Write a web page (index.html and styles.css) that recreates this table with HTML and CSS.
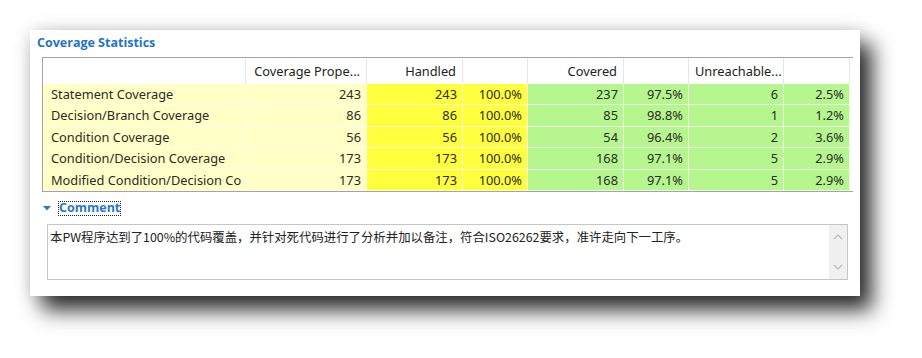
FILE: index.html
```html
<!DOCTYPE html>
<html>
<head>
<meta charset="utf-8">
<link rel="stylesheet" href="styles.css">
</head>
<body>
<div class="page">
<div class="panel">
  <div class="title">Coverage Statistics</div>
  <div class="grid">
    <div class="h"></div>
    <div class="h">Coverage Prope...</div>
    <div class="h">Handled</div>
    <div class="h"></div>
    <div class="h">Covered</div>
    <div class="h"></div>
    <div class="h hl">Unreachable...</div>
    <div class="h"></div>
    <div class="h end"></div>

    <div class="c ly l">Statement Coverage</div><div class="c ly">243</div><div class="c y">243</div><div class="c y">100.0%</div><div class="c g">237</div><div class="c g">97.5%</div><div class="c g">6</div><div class="c g">2.5%</div><div class="c end"></div>
    <div class="c ly l">Decision/Branch Coverage</div><div class="c ly">86</div><div class="c y">86</div><div class="c y">100.0%</div><div class="c g">85</div><div class="c g">98.8%</div><div class="c g">1</div><div class="c g">1.2%</div><div class="c end"></div>
    <div class="c ly l">Condition Coverage</div><div class="c ly">56</div><div class="c y">56</div><div class="c y">100.0%</div><div class="c g">54</div><div class="c g">96.4%</div><div class="c g">2</div><div class="c g">3.6%</div><div class="c end"></div>
    <div class="c ly l">Condition/Decision Coverage</div><div class="c ly">173</div><div class="c y">173</div><div class="c y">100.0%</div><div class="c g">168</div><div class="c g">97.1%</div><div class="c g">5</div><div class="c g">2.9%</div><div class="c end"></div>
    <div class="c ly l">Modified Condition/Decision Co</div><div class="c ly">173</div><div class="c y">173</div><div class="c y">100.0%</div><div class="c g">168</div><div class="c g">97.1%</div><div class="c g">5</div><div class="c g">2.9%</div><div class="c end"></div>
  </div>
  <div class="comment-head">
    <svg class="tri" width="8" height="5" viewBox="0 0 8 5"><path d="M0 0 L8 0 L4 4.5 Z" fill="#2a78cc"/></svg>
    <span class="comment-label">Comment</span>
  </div>
  <div class="textbox">
    <div class="text">本PW程序达到了100%的代码覆盖，并针对死代码进行了分析并加以备注，符合ISO26262要求，准许走向下一工序。</div>
    <div class="scroll">
      <svg width="10" height="6" viewBox="0 0 10 6"><path d="M1 5 L5 1 L9 5" fill="none" stroke="#b8b8b8" stroke-width="1.2"/></svg>
      <svg width="10" height="6" viewBox="0 0 10 6"><path d="M1 1 L5 5 L9 1" fill="none" stroke="#b8b8b8" stroke-width="1.2"/></svg>
    </div>
  </div>
</div>
</div>
</body>
</html>
```
FILE: styles.css
```css
html, body { margin: 0; padding: 0; background: #fff; }
body { font-family: "Noto Sans", "Noto Sans CJK SC", sans-serif; color: #222; }
.page {
  width: 922px;
  height: 358px;
  padding: 30px 0 0 30px;
  box-sizing: border-box;
  overflow: hidden;
}
.panel {
  width: 830px;
  height: 266px;
  background: #fff;
  box-sizing: border-box;
  padding: 3px 0 0 12px;
  box-shadow: 12px 14px 20px rgba(0,0,0,0.82), 0 0 16px rgba(0,0,0,0.14);
}
.title {
  font-family: "Open Sans", "Noto Sans", sans-serif;
  font-weight: bold;
  font-size: 12.5px;
  color: #1f73cc;
  margin-left: -5px;
  height: 24px;
  line-height: 20px;
}
.grid {
  display: grid;
  grid-template-columns: 203px 121px 96px 65px 96px 65px 95px 66px 3px;
  grid-template-rows: 26px 21px 22px 21px 22px 21px;
  width: 809px;
  border: 1px solid #a4a4a4;
  font-size: 12.8px;
}
.h {
  background: #fff;
  border-right: 1px solid #e6e6e6;
  text-align: right;
  padding: 0 6px 0 4px;
  line-height: 26px;
  color: #222;
  white-space: nowrap;
  overflow: hidden;
}
.h.hl { text-align: left; padding-left: 6px; }
.h.end, .c.end { border-right: none; background: #fff; padding: 0; }
.c {
  text-align: right;
  padding: 0 5px 0 4px;
  line-height: 21px;
  border-right: 1px solid rgba(255,255,255,0.75);
  border-bottom: 1px solid rgba(255,255,255,0.75);
  box-sizing: border-box;
  white-space: nowrap;
  overflow: hidden;
  color: #2b2b2b;
}
.c.l { text-align: left; padding-left: 8px; }
.ly { background: #ffffc6; }
.y { background: #ffff3e; }
.g { background: #b6f68e; }
.comment-head {
  display: flex;
  align-items: center;
  height: 22px;
  margin-top: 5px;
  margin-left: 1px;
}
.tri { margin-top: 1px; }
.comment-label {
  margin-left: 7px;
  font-family: "Open Sans", "Noto Sans", sans-serif;
  font-weight: bold;
  font-size: 12.5px;
  color: #2a78cc;
  border: 1px dotted #222;
  line-height: 12px;
  padding: 0 0 1px 0;
}
.textbox {
  display: flex;
  width: 801px;
  height: 56px;
  margin: 5px 0 0 5px;
  border: 1px solid #c6c6c6;
  box-sizing: border-box;
}
.text {
  flex: 1;
  font-family: "Noto Sans CJK SC", sans-serif;
  font-size: 12.4px;
  color: #222;
  padding: 4px 2px;
  line-height: 16px;
}
.scroll {
  width: 18px;
  background: #f0f0f0;
  display: flex;
  flex-direction: column;
  justify-content: space-between;
  align-items: center;
  padding: 9px 0 9px;
}
.scroll svg { display: block; }
```
